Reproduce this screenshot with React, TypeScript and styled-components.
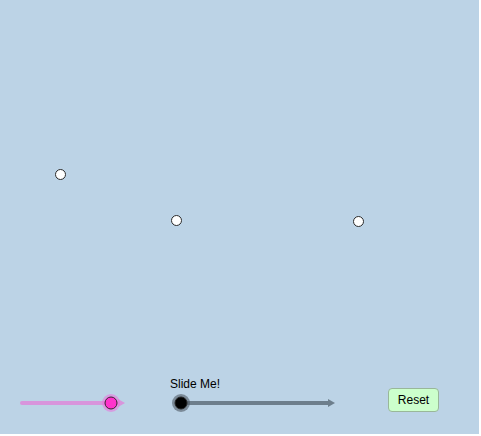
import React from "react";
import styled, { createGlobalStyle } from "styled-components";

const GlobalStyle = createGlobalStyle`
  html, body {
    margin: 0;
    padding: 0;
    background: #ffffff;
  }
  body {
    font-family: "Liberation Sans", Arial, sans-serif;
  }
`;

const Canvas = styled.div`
  width: 479px;
  height: 434px;
  background: #bcd3e6;
  display: flex;
  flex-direction: column;
  overflow: hidden;
`;

const Stage = styled.div`
  position: relative;
  height: 378px;
  flex-shrink: 0;
`;

const Point = styled.div<{ $x: number; $y: number }>`
  position: absolute;
  left: ${(p) => p.$x - 5.5}px;
  top: ${(p) => p.$y - 5.5}px;
  width: 9px;
  height: 9px;
  border-radius: 50%;
  background: #ffffff;
  border: 1px solid #2b2b2b;
`;

const ControlsRow = styled.div`
  display: flex;
  align-items: flex-start;
  height: 56px;
`;

const SliderSvg = styled.svg<{ $left: number }>`
  display: block;
  margin-left: ${(p) => p.$left}px;
  overflow: visible;
`;

const PlainSlot = styled.div`
  margin-top: 13px;
`;

const SliderGroup = styled.div`
  display: flex;
  flex-direction: column;
  margin-left: 38px;
`;

const SliderLabel = styled.div`
  font-size: 12px;
  line-height: 13px;
  height: 13px;
  color: #000000;
  padding-left: 2px;
`;

const ResetButton = styled.button`
  margin-left: 48px;
  margin-top: 10px;
  width: 51px;
  height: 24px;
  padding: 0;
  background: #ccffcc;
  border: 1px solid #99b799;
  border-radius: 4px;
  font-family: "Liberation Sans", Arial, sans-serif;
  font-size: 12px;
  color: #000000;
  cursor: pointer;
`;

type SliderProps = {
  left: number;
  width: number;
  lineStart: number;
  lineEnd: number;
  knob: number;
  color: string;
  halo: string;
  knobFill: string;
  knobStroke: string;
};

const Slider = ({ left, width, lineStart, lineEnd, knob, color, halo, knobFill, knobStroke }: SliderProps) => (
  <SliderSvg $left={left} width={width} height={24} viewBox={`0 0 ${width} 24`}>
    <line x1={lineStart} y1={12} x2={lineEnd} y2={12} stroke={color} strokeWidth={4} strokeLinecap="round" />
    <polygon points={`${lineEnd},8 ${lineEnd + 7},12 ${lineEnd},16`} fill={color} />
    <circle cx={knob} cy={12} r={9} fill={halo} />
    <circle cx={knob} cy={12} r={6} fill={knobFill} stroke={knobStroke} strokeWidth={1} />
  </SliderSvg>
);

const points = [
  { x: 60, y: 174.5 },
  { x: 176, y: 220.5 },
  { x: 358, y: 221 },
];

export default function App() {
  return (
    <>
      <GlobalStyle />
      <Canvas>
        <Stage>
          {points.map((p, i) => (
            <Point key={i} $x={p.x} $y={p.y} />
          ))}
        </Stage>
        <ControlsRow>
          <PlainSlot>
            <Slider
              left={10}
              width={120}
              lineStart={12}
              lineEnd={108}
              knob={101}
              color="#d895dc"
              halo="rgba(232, 120, 220, 0.6)"
              knobFill="#ff33cc"
              knobStroke="#3a2030"
            />
          </PlainSlot>
          <SliderGroup>
            <SliderLabel>Slide Me!</SliderLabel>
            <Slider
              left={0}
              width={172}
              lineStart={13}
              lineEnd={160}
              knob={13}
              color="#6d7e8c"
              halo="rgba(80, 90, 100, 0.6)"
              knobFill="#000000"
              knobStroke="#222222"
            />
          </SliderGroup>
          <ResetButton>Reset</ResetButton>
        </ControlsRow>
      </Canvas>
    </>
  );
}
